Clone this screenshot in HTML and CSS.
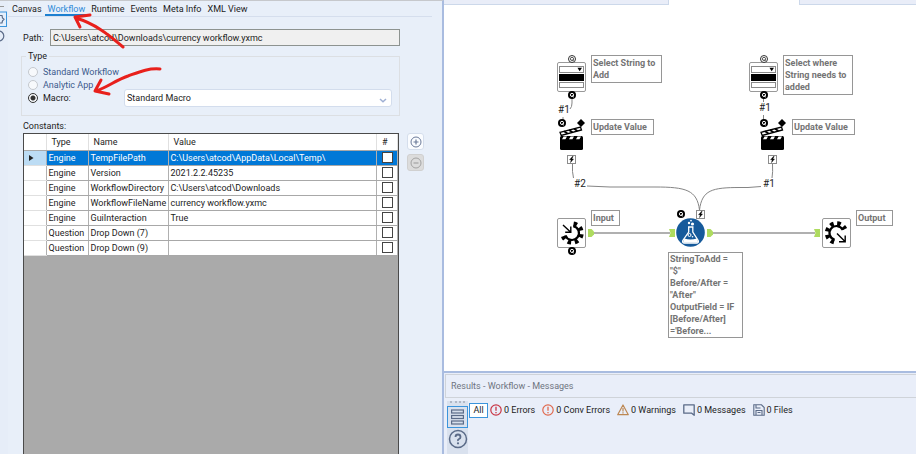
FILE: index.html
```html
<!DOCTYPE html>
<html lang="en">
<head>
<meta charset="UTF-8">
<meta name="viewport" content="width=device-width, initial-scale=1.0">
<title>Workflow Designer</title>
<link rel="stylesheet" href="styles.css">
</head>
<body>

<!-- shared icons -->
<svg class="defs" width="0" height="0">
  <symbol id="q-solid" viewBox="0 0 8 8">
    <circle cx="4" cy="4" r="4" fill="#000"/>
    <circle cx="4" cy="3.9" r="1.6" fill="#000" stroke="#fff" stroke-width="1"/>
    <path d="M4.2 4.6L5.8 6.2" stroke="#fff" stroke-width="1"/>
  </symbol>
  <symbol id="q-ring" viewBox="0 0 8 8">
    <circle cx="4" cy="4" r="3.5" fill="#fff" stroke="#333" stroke-width="1"/>
    <circle cx="4" cy="3.9" r="1.6" fill="#fff" stroke="#444" stroke-width=".9"/>
    <path d="M4.2 4.6L5.6 6" stroke="#444" stroke-width=".9"/>
  </symbol>
  <symbol id="bolt" viewBox="0 0 9 9">
    <rect x=".5" y=".5" width="8" height="8" fill="#fff" stroke="#8c8c8c"/>
    <path d="M5.4 1.4L2.6 4.7H4.3L3.5 7.6L6.5 4H4.8L6.2 1.4Z" fill="#000" stroke="#000" stroke-width=".4"/>
  </symbol>
  <symbol id="dropdown" viewBox="0 0 29 30">
    <rect x=".5" y=".5" width="28" height="29" rx="1.5" fill="#fff" stroke="#999"/>
    <rect x="2.5" y="4.5" width="24" height="6" fill="#fff" stroke="#8a8a8a"/>
    <path d="M20.5 5.8H25L22.7 9.2Z" fill="#000"/>
    <rect x="2" y="12" width="25" height="7" fill="#000"/>
    <rect x="2.5" y="20.5" width="24" height="5" fill="#fff" stroke="#8a8a8a"/>
  </symbol>
  <symbol id="clapper" viewBox="0 0 25 25">
    <path d="M1 6.3L21.5 1L22.5 4L2.2 9.4Z" fill="#fff" stroke="#000" stroke-width="1.3"/>
    <path d="M5 5.3L8.5 7.6M10 4L13.5 6.3M15 2.7L18.5 5" stroke="#000" stroke-width="1.8"/>
    <rect x="1" y="10" width="23" height="14" rx="1.5" fill="#000"/>
    <path d="M3 13.2L4.6 10.6H8L6.4 13.2ZM10 13.2L11.6 10.6H15L13.4 13.2ZM17 13.2L18.6 10.6H22L20.4 13.2Z" fill="#fff"/>
  </symbol>
  <symbol id="gear-in" viewBox="0 0 29 30">
    <rect x=".5" y=".5" width="28" height="29" rx="1.5" fill="#fff" stroke="#999"/>
    <path d="M16.2 8.1A7 7 0 1 1 8.4 17.4" fill="none" stroke="#000" stroke-width="2.2"/>
    <path d="M16.6 5.6A9.5 9.5 0 1 1 6.1 18.2" fill="none" stroke="#000" stroke-width="4.4" stroke-dasharray="3.5 3.76"/>
    <path d="M6 7L13.5 14M13.8 8.6V14.2H8.2" fill="none" stroke="#000" stroke-width="1.4"/>
  </symbol>
  <symbol id="gear-out" viewBox="0 0 29 30">
    <rect x=".5" y=".5" width="28" height="29" rx="1.5" fill="#fff" stroke="#999"/>
    <path d="M12.7 21.8A7 7 0 1 1 20.8 12" fill="none" stroke="#000" stroke-width="2.2"/>
    <path d="M12 24.2A9.5 9.5 0 1 1 23.1 11" fill="none" stroke="#000" stroke-width="4.4" stroke-dasharray="3.5 3.42"/>
    <path d="M15 15.5L23 23.5M23.2 17.5V23.7H17" fill="none" stroke="#000" stroke-width="1.4"/>
  </symbol>
  <symbol id="port-out" viewBox="0 0 6 8">
    <path d="M0 0H3.5L6 2.5V5.5L3.5 8H0Z" fill="#aedb5f"/>
  </symbol>
  <symbol id="port-in" viewBox="0 0 6 8">
    <path d="M0 0H6V8H0L1.5 4Z" fill="#aedb5f"/>
  </symbol>
</svg>

<div class="app">
  <aside class="config">
    <div class="rail">
      <svg width="8" height="42" viewBox="0 0 8 42">
        <path d="M0 5.5H4" stroke="#999"/>
        <rect x="-6" y="11" width="12.5" height="14.5" fill="#e4effc" stroke="#3b94dc"/>
        <path d="M0 14.5H2L2.5 17L4 18.3L2.5 19.8L2 22H0" fill="none" stroke="#5b6b88" stroke-width="1.2"/>
        <circle cx="-1.2" cy="35" r="5" fill="none" stroke="#5b6b88" stroke-width="1.2"/>
      </svg>
    </div>
    <div class="config-body">
      <nav class="tabs">
        <a href="#canvas">Canvas</a>
        <a href="#workflow" class="active">Workflow</a>
        <a href="#runtime">Runtime</a>
        <a href="#events">Events</a>
        <a href="#meta">Meta Info</a>
        <a href="#xml">XML View</a>
      </nav>

      <div class="path-row">
        <label for="path">Path:</label>
        <input type="text" id="path" value="C:\Users\atcod\Downloads\currency workflow.yxmc" readonly>
      </div>

      <fieldset class="type-group">
        <legend>Type</legend>
        <div class="radio-row">
          <input type="radio" name="type" id="typeStandard">
          <label for="typeStandard">Standard Workflow</label>
        </div>
        <div class="radio-row">
          <input type="radio" name="type" id="typeApp">
          <label for="typeApp">Analytic App</label>
        </div>
        <div class="radio-row">
          <input type="radio" name="type" id="typeMacro" checked>
          <label for="typeMacro" class="selected">Macro:</label>
          <div class="select-wrap">
            <select id="macroKind" aria-label="Macro kind">
              <option>Standard Macro</option>
            </select>
            <svg class="chevron" width="8" height="5" viewBox="0 0 8 5"><path d="M1 1L4 3.8L7 1" fill="none" stroke="#9fb0d4" stroke-width="1.5"/></svg>
          </div>
        </div>
      </fieldset>

      <div class="constants-title">Constants:</div>
      <div class="constants">
        <div class="grid">
          <table>
            <thead>
              <tr><th class="col-mark"></th><th class="col-type">Type</th><th class="col-name">Name</th><th>Value</th><th class="col-num">#</th></tr>
            </thead>
            <tbody>
              <tr class="current"><td class="mark"><svg width="5" height="6" viewBox="0 0 5 6"><path d="M0 0L4.5 3L0 6Z" fill="#222"/></svg></td><td>Engine</td><td>TempFilePath</td><td>C:\Users\atcod\AppData\Local\Temp\</td><td class="check"><input type="checkbox" aria-label="TempFilePath is numeric"></td></tr>
              <tr><td class="mark"></td><td>Engine</td><td>Version</td><td>2021.2.2.45235</td><td class="check"><input type="checkbox" aria-label="Version is numeric"></td></tr>
              <tr><td class="mark"></td><td>Engine</td><td>WorkflowDirectory</td><td>C:\Users\atcod\Downloads</td><td class="check"><input type="checkbox" aria-label="WorkflowDirectory is numeric"></td></tr>
              <tr><td class="mark"></td><td>Engine</td><td>WorkflowFileName</td><td>currency workflow.yxmc</td><td class="check"><input type="checkbox" aria-label="WorkflowFileName is numeric"></td></tr>
              <tr><td class="mark"></td><td>Engine</td><td>GuiInteraction</td><td>True</td><td class="check"><input type="checkbox" aria-label="GuiInteraction is numeric"></td></tr>
              <tr><td class="mark"></td><td>Question</td><td>Drop Down (7)</td><td></td><td class="check"><input type="checkbox" aria-label="Drop Down (7) is numeric"></td></tr>
              <tr><td class="mark"></td><td>Question</td><td>Drop Down (9)</td><td></td><td class="check"><input type="checkbox" aria-label="Drop Down (9) is numeric"></td></tr>
            </tbody>
          </table>
        </div>
        <div class="grid-buttons">
          <button type="button" aria-label="Add constant"><svg width="12" height="12" viewBox="0 0 12 12"><circle cx="6" cy="6" r="5" fill="none" stroke="#6b7a99"/><path d="M3.5 6H8.5M6 3.5V8.5" stroke="#6b7a99" stroke-width="1.2"/></svg></button>
          <button type="button" class="off" aria-label="Remove constant" disabled><svg width="12" height="12" viewBox="0 0 12 12"><circle cx="6" cy="6" r="5" fill="none" stroke="#a3a3a3"/><path d="M3.5 6H8.5" stroke="#a3a3a3" stroke-width="1.2"/></svg></button>
        </div>
      </div>
    </div>

    <!-- hand-drawn pointers -->
    <svg class="arrows" width="180" height="110" viewBox="0 0 180 110">
      <path d="M123 47C113 39 99 25 76 18M90 15L75 17L80 27"/>
      <path d="M160 69C148 68 139 72 128 76C116 80 108 87 96 91M101 80L95 91L109 94"/>
    </svg>
  </aside>

  <main class="work">
    <div class="canvas">
      <div class="doc-strip strip-left"></div>
      <div class="doc-strip strip-right"></div>

      <svg class="wires" width="471" height="371" viewBox="445 0 471 371">
        <g fill="none" stroke="#858585">
          <path d="M572 98V103Q572 107 570 109M563 117V120"/>
          <path d="M572.5 164Q572 172 573.5 178"/>
          <path d="M587 186L610 187H655C686 187 697 190 699.5 210"/>
          <path d="M763.5 98V102M763.5 115V120"/>
          <path d="M772.5 164Q773 172 772 178"/>
          <path d="M761 186.5L748 187.5H740C712 187.5 702 190 699.5 210"/>
        </g>
        <path d="M593 233H670M712 233H815" stroke="#b0b0b0" stroke-width="2"/>
        <path d="M581 119L585 123L581 127L577 123ZM782 119L786 123L782 127L778 123Z" fill="#000"/>
      </svg>

      <svg class="node drop-a" width="29" height="30"><use href="#dropdown"/></svg>
      <svg class="node q-a1" width="8" height="8"><use href="#q-ring"/></svg>
      <svg class="node q-a2" width="8" height="8"><use href="#q-solid"/></svg>
      <svg class="node q-a3" width="8" height="8"><use href="#q-solid"/></svg>
      <svg class="node clap-a" width="25" height="25"><use href="#clapper"/></svg>
      <svg class="node bolt-a" width="9" height="9"><use href="#bolt"/></svg>
      <div class="note note-a1">Select String to Add</div>
      <div class="note note-a2">Update Value</div>
      <span class="wire-no no-a1">#1</span>
      <span class="wire-no no-a2">#2</span>

      <svg class="node drop-b" width="29" height="30"><use href="#dropdown"/></svg>
      <svg class="node q-b1" width="8" height="8"><use href="#q-ring"/></svg>
      <svg class="node q-b2" width="8" height="8"><use href="#q-solid"/></svg>
      <svg class="node q-b3" width="8" height="8"><use href="#q-solid"/></svg>
      <svg class="node clap-b" width="25" height="25"><use href="#clapper"/></svg>
      <svg class="node bolt-b" width="9" height="9"><use href="#bolt"/></svg>
      <div class="note note-b1">Select where String needs to added</div>
      <div class="note note-b2">Update Value</div>
      <span class="wire-no no-b1">#1</span>
      <span class="wire-no no-b2">#1</span>

      <svg class="node input-tool" width="29" height="30"><use href="#gear-in"/></svg>
      <svg class="node q-in" width="8" height="8"><use href="#q-solid"/></svg>
      <svg class="node port-a" width="6" height="8"><use href="#port-out"/></svg>
      <div class="note note-in">Input</div>

      <svg class="node port-b" width="6" height="8"><use href="#port-in"/></svg>
      <svg class="node formula" width="29" height="29" viewBox="0 0 29 29">
        <circle cx="14.5" cy="14.5" r="14.3" fill="#165a9b"/>
        <path d="M12 9H17.5M12.7 9V14L6.8 22.5Q6 25 8.5 25H20.5Q23 25 22.2 22.5L16.8 14V9" fill="none" stroke="#fff" stroke-width="1.3"/>
        <path d="M8.5 20.5Q14 22.5 21 20.5L22 23.5Q21.5 24.5 20.5 24.5H8.5Q7 24.5 7.2 23Z" fill="#fff"/>
        <circle cx="13.5" cy="17" r="1.5" fill="none" stroke="#fff"/>
        <circle cx="16.5" cy="18.8" r=".8" fill="#fff"/>
        <circle cx="13" cy="5" r="1.2" fill="#fff"/>
        <circle cx="16.5" cy="6" r="1.6" fill="#fff"/>
        <circle cx="15" cy="2.6" r=".9" fill="#fff"/>
      </svg>
      <svg class="node port-c" width="6" height="8"><use href="#port-out"/></svg>
      <svg class="node q-f" width="8" height="8"><use href="#q-solid"/></svg>
      <svg class="node bolt-f" width="9" height="9"><use href="#bolt"/></svg>
      <div class="note note-f">StringToAdd =<br>"$"<br>Before/After =<br>"After"<br>OutputField = IF<br>[Before/After]<br>='Before...</div>

      <svg class="node port-d" width="6" height="8"><use href="#port-in"/></svg>
      <svg class="node output-tool" width="29" height="30"><use href="#gear-out"/></svg>
      <div class="note note-out">Output</div>
    </div>

    <section class="results">
      <h2>Results - Workflow - Messages</h2>
      <div class="results-body">
        <div class="results-rail">
          <span class="grip"></span>
          <button type="button" class="list-button" aria-label="Messages">
            <svg width="13" height="16" viewBox="0 0 13 16"><g fill="#d6dfec" stroke="#5b6b88" stroke-width="1.2"><rect x=".6" y="1" width="11.8" height="3"/><rect x=".6" y="6.5" width="11.8" height="3"/><rect x=".6" y="12" width="11.8" height="3"/></g></svg>
          </button>
          <button type="button" class="help-button" aria-label="Help">
            <svg width="20" height="20" viewBox="0 0 20 20"><circle cx="10" cy="10" r="8.5" fill="none" stroke="#5b6b88" stroke-width="1.5"/><path d="M7.5 8Q7.5 5.5 10 5.5T12.5 8Q12.5 9.3 11 10T10 12" fill="none" stroke="#5b6b88" stroke-width="1.8"/><circle cx="10" cy="14.3" r="1.1" fill="#5b6b88"/></svg>
          </button>
        </div>
        <div class="filters">
          <button type="button" class="all">All</button>
          <button type="button"><svg width="12" height="12" viewBox="0 0 12 12"><circle cx="6" cy="6" r="5.2" fill="none" stroke="#c93545" stroke-width="1.2"/><path d="M6 2.8V6.8M6 8V9.3" stroke="#c93545" stroke-width="1.3"/></svg>0 Errors</button>
          <button type="button"><svg width="12" height="12" viewBox="0 0 12 12"><circle cx="6" cy="6" r="5.2" fill="none" stroke="#e0694f" stroke-width="1.2"/><path d="M6 2.8V6.8M6 8V9.3" stroke="#e0694f" stroke-width="1.3"/></svg>0 Conv Errors</button>
          <button type="button"><svg width="12" height="12" viewBox="0 0 12 12"><path d="M6 1L11.3 10.7H.7Z" fill="none" stroke="#bd8752" stroke-width="1.2" stroke-linejoin="round"/><path d="M6 4V7.5M6 8.3V9.5" stroke="#bd8752" stroke-width="1.2"/></svg>0 Warnings</button>
          <button type="button"><svg width="12" height="12" viewBox="0 0 12 12"><path d="M.8 .8H11.2V11.3L8.7 9.2H.8Z" fill="none" stroke="#5b6b88" stroke-width="1.3" stroke-linejoin="round"/></svg>0 Messages</button>
          <button type="button"><svg width="12" height="12" viewBox="0 0 12 12"><path d="M.8 .8H8.5L11.2 3.5V11.2H.8ZM3 .8V4H7.5M3 11V6.5H9V11M4.5 8.5H7.5" fill="none" stroke="#5b6b88" stroke-width="1.1"/></svg>0 Files</button>
        </div>
      </div>
    </section>
  </main>
</div>

</body>
</html>
```
FILE: styles.css
```css
* {
  box-sizing: border-box;
}
body {
  margin: 0;
  font-family: Roboto, "Open Sans", sans-serif;
  font-size: 9px;
  line-height: 12px;
  color: #1c1c1c;
  background-color: #e8eff9;
}
input, select, button {
  font: inherit;
  color: inherit;
  margin: 0;
}
button {
  display: flex;
  align-items: center;
  justify-content: center;
  padding: 0;
  border: none;
  background: none;
  cursor: pointer;
}
svg {
  display: block;
  flex-shrink: 0;
}
.defs {
  position: absolute;
}
.app {
  display: flex;
  height: 100vh;
  overflow: hidden;
}

/* configuration panel */
.config {
  position: relative;
  display: flex;
  flex: 0 0 444px;
  border-top: 1px solid #c6c8cc;
  border-right: 2px solid #a9bce0;
}
.rail {
  width: 8px;
  background-color: #e6edf8;
}
.config-body {
  flex: 1;
  display: flex;
  flex-direction: column;
  padding: 2px 10px 0 0;
}
.tabs {
  display: flex;
  padding-left: 1px;
  border-bottom: 1px solid #d5deed;
}
.tabs a {
  padding: 0 3px;
  height: 13px;
  color: inherit;
  text-decoration: none;
}
.tabs .active {
  color: #2f8ad8;
  border-bottom: 2px solid #1c7fd0;
}
.path-row {
  display: flex;
  align-items: center;
  margin: 12px 32px 0 15px;
}
.path-row label {
  width: 27px;
}
.path-row input {
  flex: 1;
  height: 17px;
  padding: 0 2px;
  border: 1px solid #8d9390;
  background-color: #f0f0f0;
}
.type-group {
  margin: 4px 32px 0 13px;
  padding: 3px 7px 11px 6px;
  border: 1px solid #dcdfe3;
}
.type-group legend {
  margin-left: -2px;
  padding: 0 2px;
}
.radio-row {
  display: flex;
  align-items: center;
  gap: 5px;
  height: 13px;
  color: #3c5a8c;
}
.radio-row input {
  appearance: none;
  width: 10px;
  height: 10px;
  border: 1px solid #c4c8ce;
  border-radius: 50%;
  background-color: #f7f9fc;
}
.radio-row input:checked {
  border-color: #333;
  background: radial-gradient(#333 0 2px, #f7f9fc 3px);
}
.radio-row label {
  width: 76px;
  white-space: nowrap;
}
.radio-row .selected {
  color: #1c1c1c;
}
.select-wrap {
  position: relative;
  flex: 1;
}
.select-wrap select {
  display: block;
  appearance: none;
  width: 100%;
  height: 18px;
  padding: 0 2px;
  border: 1px solid #d3dded;
  border-radius: 3px;
  background-color: #fff;
  color: #1c1c1c;
}
.chevron {
  position: absolute;
  right: 5px;
  top: 9px;
}
.constants-title {
  margin: 4px 0 1px 15px;
}
.constants {
  flex: 1;
  display: flex;
  gap: 8px;
  padding: 0 8px 0 15px;
}
.grid {
  flex: 1;
  border: 1px solid #4a4a4a;
  border-bottom: none;
  background-color: #aaa;
}
.grid table {
  width: 100%;
  table-layout: fixed;
  border-collapse: collapse;
  background-color: #fff;
}
.grid th, .grid td {
  height: 15px;
  padding: 0 2px;
  border-right: 1px solid #b0b0b0;
  border-bottom: 1px solid #a8a8a8;
  font-weight: normal;
  text-align: left;
  line-height: 12px;
  white-space: nowrap;
}
.grid th {
  height: 16px;
  padding: 0 5px;
  border-right-color: #e0e0e0;
}
.grid .col-mark {
  width: 22px;
}
.grid .col-type {
  width: 42px;
}
.grid .col-name {
  width: 80px;
}
.grid .col-num {
  width: 21px;
}
.grid .mark {
  padding-left: 5px;
  border-bottom-color: #e0e0e0;
}
.grid .current {
  background-color: #0078d7;
  color: #fff;
}
.grid .current .mark {
  background-color: #bcdcf4;
}
.grid .check {
  padding: 0 5px;
}
.check input {
  display: block;
  appearance: none;
  width: 11px;
  height: 11px;
  border: 1px solid #444;
  background-color: #fff;
}
.grid-buttons {
  display: flex;
  flex-direction: column;
  gap: 4px;
}
.grid-buttons button {
  width: 17px;
  height: 17px;
  border: 1px solid #d5deec;
  border-radius: 3px;
  background-color: #fafcff;
}
.grid-buttons .off {
  border-color: #d0d0d0;
  background-color: #dcdcdc;
}
.arrows {
  position: absolute;
  left: 0;
  top: -1px;
  pointer-events: none;
}
.arrows path {
  fill: none;
  stroke: #e8201c;
  stroke-width: 3px;
  stroke-linecap: round;
  stroke-linejoin: round;
}

/* canvas */
.work {
  flex: 1;
  display: flex;
  flex-direction: column;
  min-width: 0;
}
.canvas {
  position: relative;
  flex: 1;
  overflow: hidden;
  background-color: #fff;
}
.doc-strip {
  position: absolute;
  top: 0;
  height: 5px;
  background-color: #e9edf8;
  border-bottom: 1px solid #ccd8ea;
}
.strip-left {
  left: 0;
  width: 225px;
  border-right: 1px solid #ccd8ea;
}
.strip-right {
  left: 355px;
  right: 0;
  border-left: 1px solid #ccd8ea;
}
.wires {
  position: absolute;
  left: 1px;
  top: 0;
}
.node, .note, .wire-no {
  position: absolute;
}
.note {
  padding: 1px;
  border: 1px solid #969696;
  background-color: #fff;
  color: #747474;
  font-weight: bold;
}
.wire-no {
  color: #222;
  font-size: 10px;
}
.drop-a { left: 113px; top: 62px; }
.q-a1 { left: 124px; top: 55px; }
.q-a2 { left: 124px; top: 91px; }
.q-a3 { left: 114px; top: 119px; }
.clap-a { left: 115px; top: 126px; }
.bolt-a { left: 123px; top: 155px; }
.note-a1 { left: 147px; top: 55px; width: 71px; }
.note-a2 { left: 147px; top: 119px; width: 63px; }
.no-a1 { left: 114px; top: 104px; }
.no-a2 { left: 130px; top: 178px; }
.drop-b { left: 305px; top: 62px; }
.q-b1 { left: 316px; top: 55px; }
.q-b2 { left: 316px; top: 91px; }
.q-b3 { left: 316px; top: 119px; }
.clap-b { left: 316px; top: 126px; }
.bolt-b { left: 324px; top: 155px; }
.note-b1 { left: 339px; top: 55px; width: 70px; }
.note-b2 { left: 348px; top: 119px; width: 63px; }
.no-b1 { left: 315px; top: 102px; }
.no-b2 { left: 319px; top: 178px; }
.input-tool { left: 113px; top: 218px; }
.q-in { left: 124px; top: 247px; }
.port-a { left: 144px; top: 229px; }
.note-in { left: 147px; top: 210px; width: 29px; }
.port-b { left: 225px; top: 229px; }
.formula { left: 232px; top: 218px; }
.port-c { left: 263px; top: 229px; }
.q-f { left: 233px; top: 210px; }
.bolt-f { left: 252px; top: 210px; }
.note-f { left: 224px; top: 252px; width: 75px; padding: 0 1px; }
.port-d { left: 370px; top: 229px; }
.output-tool { left: 378px; top: 218px; }
.note-out { left: 412px; top: 210px; width: 37px; }

/* results */
.results {
  flex: 0 0 auto;
  border-top: 2px solid #a9bce0;
  background-color: #e9eef9;
}
.results h2 {
  margin: 1px 0 0 1px;
  padding: 5px;
  border: 1px solid #cfd3d9;
  border-right: none;
  font-size: 9px;
  font-weight: normal;
  color: #6e7480;
}
.results-body {
  display: flex;
  padding: 3px 0 0 3px;
}
.results-rail {
  display: flex;
  flex-direction: column;
  align-items: center;
  width: 21px;
  height: 53px;
  background-color: #d9e1ee;
}
.grip {
  width: 15px;
  height: 5px;
  border-top: 2px dotted #b0b8c6;
}
.list-button {
  width: 21px;
  height: 22px;
  border: 1px solid #3b94dc;
}
.help-button {
  width: 21px;
  height: 22px;
}
.filters {
  display: flex;
  align-items: center;
  gap: 7px;
  height: 16px;
  margin: 1px 0 0 1px;
}
.filters button {
  gap: 2px;
  white-space: nowrap;
}
.filters .all {
  width: 19px;
  height: 15px;
  margin-right: -5px;
  border: 1px solid #3b94dc;
  background-color: #fff;
}
```
